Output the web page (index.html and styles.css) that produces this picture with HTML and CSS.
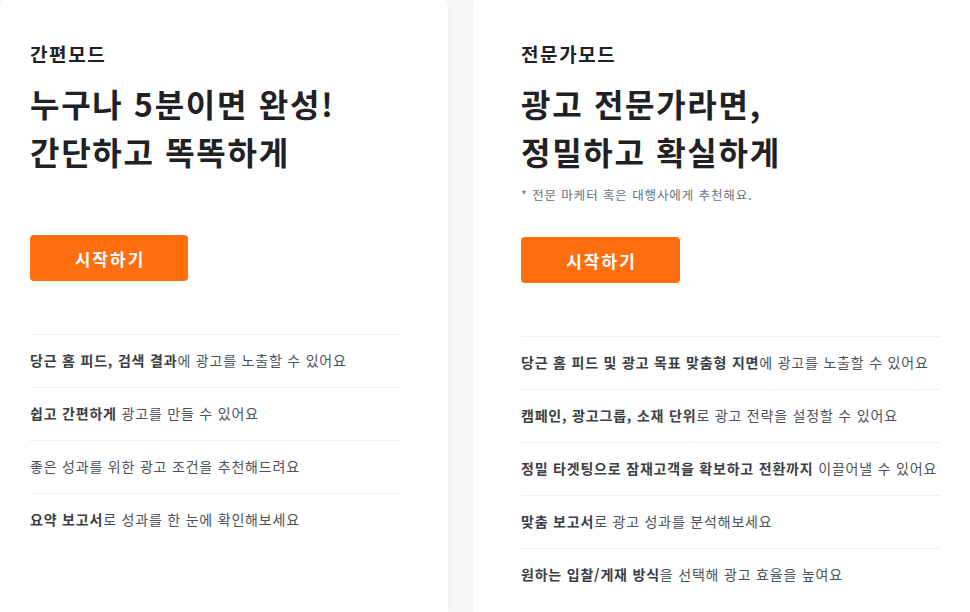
FILE: index.html
```html
<!DOCTYPE html>
<html lang="ko">
<head>
<meta charset="utf-8">
<title>광고 모드 선택</title>
<link rel="stylesheet" href="styles.css">
</head>
<body>
<div class="page">
  <section class="card card-simple">
    <div class="intro">
      <h2 class="mode">간편모드</h2>
      <h1 class="headline">누구나 5분이면 완성!<br>간단하고 똑똑하게</h1>
    </div>
    <button class="start">시작하기</button>
    <ul class="features">
      <li><b>당근 홈 피드, 검색 결과</b>에 광고를 노출할 수 있어요</li>
      <li><b>쉽고 간편하게</b> 광고를 만들 수 있어요</li>
      <li>좋은 성과를 위한 광고 조건을 추천해드려요</li>
      <li><b>요약 보고서</b>로 성과를 한 눈에 확인해보세요</li>
    </ul>
  </section>
  <section class="card card-expert">
    <div class="intro">
      <h2 class="mode">전문가모드</h2>
      <h1 class="headline">광고 전문가라면,<br>정밀하고 확실하게</h1>
      <p class="note">* 전문 마케터 혹은 대행사에게 추천해요.</p>
    </div>
    <button class="start">시작하기</button>
    <ul class="features">
      <li><b>당근 홈 피드 및 광고 목표 맞춤형 지면</b>에 광고를 노출할 수 있어요</li>
      <li><b>캠페인, 광고그룹, 소재 단위</b>로 광고 전략을 설정할 수 있어요</li>
      <li><b>정밀 타겟팅으로 잠재고객을 확보하고 전환까지</b> 이끌어낼 수 있어요</li>
      <li><b>맞춤 보고서</b>로 광고 성과를 분석해보세요</li>
      <li><b>원하는 입찰/게재 방식</b>을 선택해 광고 효율을 높여요</li>
    </ul>
  </section>
</div>
</body>
</html>
```

FILE: styles.css
```css
html, body {
  margin: 0;
  padding: 0;
  background: #f5f6f8;
  font-family: "Noto Sans CJK KR", "Noto Sans", sans-serif;
  color: #212124;
  overflow: hidden;
}

.page {
  display: flex;
  gap: 25px;
  width: 970px;
  height: 612px;
  align-items: stretch;
  overflow: hidden;
}

.card {
  background: #ffffff;
  border-radius: 12px 12px 0 0;
  margin-top: -6px;
  padding-top: 46px;
  box-shadow: 0 0 4px rgba(0, 0, 0, 0.04);
  box-sizing: border-box;
  overflow: hidden;
}

.card-simple {
  width: 448px;
  flex: none;
  padding-left: 30px;
  padding-right: 47px;
}

.card-expert {
  flex: none;
  width: 510px;
  padding-left: 48px;
  padding-right: 0;
}

.card-expert .features {
  width: 419px;
}

.intro {
  min-height: 162px;
}

.mode {
  margin: 0;
  font-size: 19px;
  line-height: 28px;
  font-weight: 700;
  letter-spacing: 1.6px;
  color: #212124;
}

.headline {
  margin: 11px 0 0;
  font-size: 32px;
  line-height: 48px;
  font-weight: 700;
  color: #212124;
  letter-spacing: 1.7px;
}

.note {
  margin: 11px 0 0;
  font-size: 12.5px;
  line-height: 18px;
  letter-spacing: 0.9px;
  color: #6b6f78;
}

.start {
  display: block;
  margin-top: 33px;
  width: 158px;
  height: 46px;
  border: none;
  border-radius: 4px;
  background: #ff6f0f;
  color: #ffffff;
  font-family: inherit;
  font-size: 17px;
  font-weight: 700;
  letter-spacing: 2px;
  padding: 0 0 0 2px;
  cursor: pointer;
}

.card-expert .start {
  width: 159px;
}

.features {
  list-style: none;
  margin: 53px 0 0;
  padding: 0;
}

.features li {
  border-top: 1px solid #eceef1;
  height: 53px;
  box-sizing: border-box;
  line-height: 50px;
  font-size: 14px;
  letter-spacing: 0.8px;
  color: #4d5159;
  white-space: nowrap;
}

.features b {
  font-weight: 700;
  color: #3b3e44;
}
```
